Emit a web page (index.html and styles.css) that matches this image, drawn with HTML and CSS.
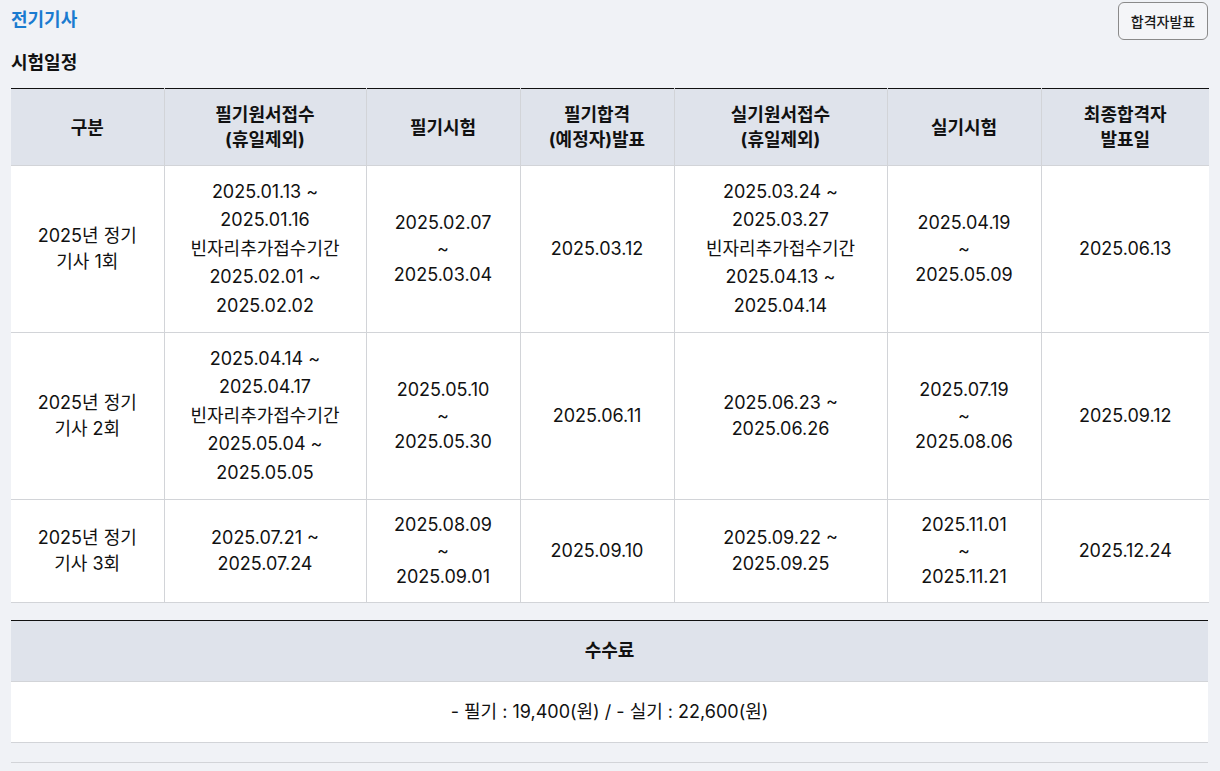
FILE: index.html
```html
<!DOCTYPE html>
<html lang="ko">
<head>
<meta charset="utf-8">
<title>전기기사</title>
<link rel="stylesheet" href="styles.css">
</head>
<body>
<div class="page">
  <div class="top">
    <h1 class="title">전기기사</h1>
    <button class="btn">합격자발표</button>
  </div>
  <h2 class="section">시험일정</h2>
  <table class="grid">
    <colgroup>
      <col style="width:153px"><col style="width:202px"><col style="width:154px"><col style="width:154px"><col style="width:213px"><col style="width:154px"><col style="width:168px">
    </colgroup>
    <thead>
      <tr>
        <th>구분</th>
        <th>필기원서접수<br>(휴일제외)</th>
        <th>필기시험</th>
        <th>필기합격<br>(예정자)발표</th>
        <th>실기원서접수<br>(휴일제외)</th>
        <th>실기시험</th>
        <th>최종합격자<br>발표일</th>
      </tr>
    </thead>
    <tbody>
      <tr>
        <td>2025년 정기<br>기사 1회</td>
        <td class="tall">2025.01.13 ~<br>2025.01.16<br>빈자리추가접수기간<br>2025.02.01 ~<br>2025.02.02</td>
        <td>2025.02.07<br>~<br>2025.03.04</td>
        <td>2025.03.12</td>
        <td class="tall">2025.03.24 ~<br>2025.03.27<br>빈자리추가접수기간<br>2025.04.13 ~<br>2025.04.14</td>
        <td>2025.04.19<br>~<br>2025.05.09</td>
        <td>2025.06.13</td>
      </tr>
      <tr>
        <td>2025년 정기<br>기사 2회</td>
        <td class="tall">2025.04.14 ~<br>2025.04.17<br>빈자리추가접수기간<br>2025.05.04 ~<br>2025.05.05</td>
        <td>2025.05.10<br>~<br>2025.05.30</td>
        <td>2025.06.11</td>
        <td>2025.06.23 ~<br>2025.06.26</td>
        <td>2025.07.19<br>~<br>2025.08.06</td>
        <td>2025.09.12</td>
      </tr>
      <tr>
        <td>2025년 정기<br>기사 3회</td>
        <td>2025.07.21 ~<br>2025.07.24</td>
        <td>2025.08.09<br>~<br>2025.09.01</td>
        <td>2025.09.10</td>
        <td>2025.09.22 ~<br>2025.09.25</td>
        <td>2025.11.01<br>~<br>2025.11.21</td>
        <td>2025.12.24</td>
      </tr>
    </tbody>
  </table>
  <table class="grid fee">
    <thead>
      <tr><th>수수료</th></tr>
    </thead>
    <tbody>
      <tr><td>- 필기 : 19,400(원) / - 실기 : 22,600(원)</td></tr>
    </tbody>
  </table>
  <div class="next"></div>
</div>
</body>
</html>
```
FILE: styles.css
```css
* { box-sizing: border-box; }
html, body { margin: 0; padding: 0; }
body {
  background: #f0f2f6;
  font-family: Inter, "Noto Sans CJK KR", sans-serif;
  color: #111;
}
.page {
  padding: 0 12px 0 11px;
}
.top {
  display: flex;
  justify-content: space-between;
  align-items: flex-start;
  padding-top: 2px;
}
.title {
  margin: 5px 0 0;
  font-size: 18px;
  line-height: 26px;
  font-weight: 700;
  color: #1a7bd0;
}
.btn {
  width: 90px;
  height: 38px;
  border: 1px solid #8a8a8a;
  border-radius: 6px;
  background: #f4f5f8;
  font-family: Inter, "Noto Sans CJK KR", sans-serif;
  font-size: 14px;
  font-weight: 500;
  color: #1a1a1a;
  padding: 0;
}
.section {
  margin: 10px 0 12px;
  font-size: 18px;
  line-height: 26px;
  font-weight: 700;
  color: #111;
}
.grid {
  width: 100%;
  border-collapse: collapse;
  table-layout: fixed;
  border-top: 1px solid #111;
  font-size: 18px;
}
.grid th {
  background: #dfe3eb;
  font-weight: 700;
  color: #111;
  line-height: 25px;
  padding: 13px 6px;
  border-bottom: 1px solid #d2d4d8;
  border-left: 1px solid #d2d4d8;
}
.grid td {
  background: #fff;
  text-align: center;
  line-height: 26px;
  padding: 12px 6px;
  border-bottom: 1px solid #d2d4d8;
  border-left: 1px solid #d2d4d8;
  color: #111;
}
.grid th:first-child, .grid td:first-child { border-left: none; }
.grid td.tall { line-height: 28.4px; }
.fee { margin-top: 17px; }
.fee th { padding: 17px 8px; line-height: 26px; }
.fee td { padding: 17px 8px; line-height: 26px; }
.next {
  margin-top: 19px;
  border-top: 1px solid #d2d4d8;
  height: 10px;
}
```
